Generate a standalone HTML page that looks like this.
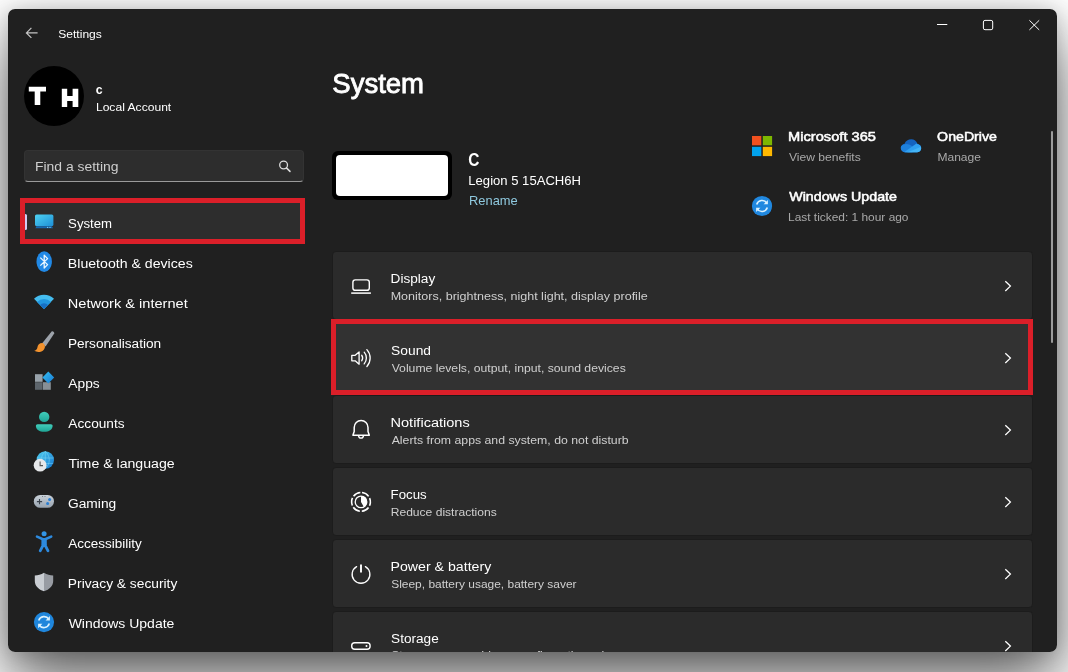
<!DOCTYPE html>
<html><head><meta charset="utf-8">
<style>
*{box-sizing:border-box;margin:0;padding:0}
html,body{width:1068px;height:672px;overflow:hidden;background:#fff;font-family:"Liberation Sans",sans-serif;color:#fff}
#win{will-change:transform;position:absolute;left:8px;top:9px;width:1049px;height:643px;background:#202020;border-radius:7px;overflow:hidden}
#shadow{position:absolute;left:8px;top:9px;width:1049px;height:643px;border-radius:7px;box-shadow:0 32px 64px rgba(0,0,0,.6),0 2px 21px rgba(0,0,0,.2)}
.abs{position:absolute}
.t{position:absolute;white-space:nowrap;transform-origin:0 50%;height:20px;line-height:20px}
.card{position:absolute;left:324px;width:701px;height:69px;background:#2b2b2b;border:1px solid #1c1c1c;border-radius:4px}
svg{position:absolute;overflow:visible}
</style></head><body>
<div id="shadow"></div>
<div id="win">
<!-- scrollbar -->
<div class="abs" style="left:1043px;top:122px;width:2px;height:212px;background:#9b9b9b;border-radius:1px"></div>

<!-- avatar -->
<div class="abs" style="left:16px;top:57px;width:60px;height:60px;border-radius:50%;background:#000"></div>
<!-- search -->
<div class="abs" style="left:16px;top:141px;width:280px;height:32px;background:#2d2d2d;border-radius:4px;border:1px solid #333;border-bottom:1px solid #9a9a9a"></div>
<!-- selected nav -->
<div class="abs" style="left:12px;top:189px;width:285px;height:46px;background:#2d2d2d"></div>
<div class="abs" style="left:16px;top:205px;width:2.8px;height:16px;background:#d3ccf4;border-radius:2px"></div>
<div class="abs" style="left:12px;top:189px;width:285px;height:46px;border:5px solid #db1f29"></div>

<!-- device thumbnail -->
<div class="abs" style="left:324px;top:142px;width:120px;height:49px;background:#000;border-radius:6px"></div>
<div class="abs" style="left:328px;top:146px;width:112px;height:41px;background:#fff;border-radius:4px"></div>

<!-- cards -->
<div class="card" style="top:242px"></div>
<div class="card" style="top:314px;background:#323232"></div>
<div class="card" style="top:386px"></div>
<div class="card" style="top:458px"></div>
<div class="card" style="top:530px"></div>
<div class="card" style="top:602px"></div>
<div class="abs" style="left:323px;top:310px;width:702px;height:76px;border:5px solid #db1f29"></div>

<svg style="left:0;top:0" width="1049" height="643" viewBox="8 9 1049 643">
<defs>
<linearGradient id="gSys" x1="0" y1="0" x2="1" y2="1"><stop offset="0" stop-color="#4fd3f2"/><stop offset="1" stop-color="#1d8fd6"/></linearGradient>
<linearGradient id="gTeal" x1="0" y1="0" x2="0" y2="1"><stop offset="0" stop-color="#41cdbb"/><stop offset="1" stop-color="#1fa596"/></linearGradient>
<linearGradient id="gGlobe" x1="0" y1="0" x2="1" y2="1"><stop offset="0" stop-color="#4fcdf0"/><stop offset="1" stop-color="#1577cf"/></linearGradient>
<linearGradient id="gPad" x1="0" y1="0" x2="0" y2="1"><stop offset="0" stop-color="#c9d1d9"/><stop offset="1" stop-color="#98a3af"/></linearGradient>
<linearGradient id="gDia" x1="0" y1="0" x2="1" y2="1"><stop offset="0" stop-color="#35c0f2"/><stop offset="1" stop-color="#1779d4"/></linearGradient>
<linearGradient id="gCloud" x1="0" y1="0" x2="0" y2="1"><stop offset="0" stop-color="#1769c4"/><stop offset="0.5" stop-color="#1f8fe6"/><stop offset="1" stop-color="#2fb0f5"/></linearGradient>
</defs>
<!-- back arrow -->
<path d="M31.4 27.9 L26.4 32.9 L31.4 37.9 M26.6 32.9 H37.6" fill="none" stroke="#c4c4c4" stroke-width="1.2"/>
<!-- window controls -->
<path d="M937 24.5 H947.3" stroke="#fff" stroke-width="1"/>
<rect x="983.4" y="20.4" width="9.3" height="9.3" rx="1.6" fill="none" stroke="#fff" stroke-width="1"/>
<path d="M1029.4 20.3 L1039.2 29.9 M1039.2 20.3 L1029.4 29.9" stroke="#fff" stroke-width="1"/>
<!-- avatar letters -->
<path d="M28.8 86.8 H46 V91.6 H40.3 V105 H34.7 V91.6 H28.8 Z" fill="#fff"/>
<path d="M61.8 88.7 H67.2 V96 H72.6 V88.7 H78.3 V106.9 H72.6 V101 H67.2 V106.9 H61.8 Z" fill="#fff"/>
<!-- search icon -->
<circle cx="283.6" cy="165" r="3.9" fill="none" stroke="#dcdcdc" stroke-width="1.3"/><path d="M286.4 167.9 L290 171.4" stroke="#dcdcdc" stroke-width="1.5" stroke-linecap="round"/>

<!-- nav: system -->
<rect x="35" y="214.4" width="18.4" height="11.8" rx="1.6" fill="url(#gSys)"/>
<path d="M36.5 226.2 H52 L53 228.2 H35.4 Z" fill="#1668b0"/>
<rect x="47" y="226.9" width="1.2" height="1" fill="#7fd4f5"/><rect x="49.4" y="226.9" width="1.2" height="1" fill="#7fd4f5"/>
<!-- bluetooth -->
<ellipse cx="44.2" cy="261.6" rx="7.7" ry="10.4" fill="#2189e6"/>
<path d="M40.3 257.6 L47.6 264.6 L44.2 268 V255.2 L47.6 258.6 L40.3 265.6" fill="none" stroke="#e8f6ff" stroke-width="1.3" stroke-linejoin="round"/>
<!-- wifi -->
<path d="M44 309 L34 298.8 A14.2 14.2 0 0 1 54 298.8 Z" fill="#45bdf0"/>
<path d="M44 309 L37 301.9 A10 10 0 0 1 51 301.9 Z" fill="#2196e0"/>
<path d="M44 309 L40 304.9 A5.7 5.7 0 0 1 48 304.9 Z" fill="#176fc4"/>
<!-- personalisation brush -->
<path d="M51.6 331.6 C52.6 330.8 54.6 332.2 54.2 333.6 L45.6 346.4 L42 343.6 Z" fill="#9da3ab"/>
<path d="M43.2 343.2 C40 342.6 37.6 345 37.4 347.6 C37.2 349.6 35.6 350.6 34.2 350.8 C37 352.6 41.6 352.4 44 349.4 C45.6 347.4 45.2 344.6 43.2 343.2 Z" fill="#f2922e"/>
<!-- apps -->
<rect x="35" y="374.2" width="7.6" height="7.6" fill="#98a2aa"/>
<rect x="35" y="382.2" width="7.6" height="7.6" fill="#5d656c"/>
<rect x="43" y="382.2" width="7.8" height="7.6" fill="#878f96"/>
<path d="M48.3 371.6 L54.2 377.5 L48.3 383.4 L42.4 377.5 Z" fill="url(#gDia)"/>
<!-- accounts -->
<circle cx="44.2" cy="416.9" r="5.2" fill="url(#gTeal)"/>
<path d="M37.6 424.2 H50.9 C52 424.2 52.6 425 52.6 426 C52.4 429.6 49 431.8 44.2 431.8 C39.4 431.8 36 429.6 35.9 426 C35.9 425 36.5 424.2 37.6 424.2 Z" fill="url(#gTeal)"/>
<!-- time & language -->
<circle cx="45.3" cy="460" r="8.7" fill="url(#gGlobe)"/>
<path d="M45.3 451.3 C40 456 40 464 45.3 468.7 M45.3 451.3 C50.6 456 50.6 464 45.3 468.7 M36.8 458 H53.8 M37.4 463.4 H53.2 M45.3 451.3 V468.7" fill="none" stroke="#7fdaf7" stroke-width=".7" opacity=".7"/>
<circle cx="40.1" cy="465.2" r="6.4" fill="#e6e8ea"/>
<path d="M40.1 461.6 V465.6 H43" fill="none" stroke="#555" stroke-width="1.1"/>
<!-- gaming -->
<rect x="33.8" y="495" width="20.2" height="12.8" rx="6.4" fill="url(#gPad)"/>
<path d="M39.5 499 V504.2 M36.9 501.6 H42.1" stroke="#39424c" stroke-width="1.1"/>
<circle cx="49.6" cy="499.4" r="1.5" fill="#2b7fd2"/><circle cx="47.6" cy="503.4" r="1.5" fill="#2b7fd2"/>
<circle cx="42.6" cy="496.6" r=".5" fill="#59636e"/><circle cx="45" cy="496.6" r=".5" fill="#59636e"/>
<!-- accessibility -->
<circle cx="44.1" cy="533.8" r="2.5" fill="#3395e6"/>
<g fill="none" stroke="#2d8ade" stroke-linecap="round" stroke-linejoin="round">
<path d="M37 536.6 L44.1 539.8 L51.2 536.6" stroke-width="2.6"/>
<path d="M44.1 540 V545" stroke-width="5.4" stroke-linecap="butt"/>
<path d="M43.2 545 L40.2 550.8 M45 545 L48 550.8" stroke-width="2.8"/>
</g>
<!-- privacy shield -->
<path d="M44 572.8 C41 574.6 38 575.4 34.8 575.4 V581 C34.8 586 38.6 589.6 44 591.2 Z" fill="#c9cdd2"/>
<path d="M44 572.8 C47 574.6 50 575.4 53.2 575.4 V581 C53.2 586 49.4 589.6 44 591.2 Z" fill="#989ca3"/>
<!-- windows update nav -->
<circle cx="44" cy="622.1" r="10.1" fill="#1f86dc"/>
<g fill="none" stroke="#d9f1ff" stroke-width="1.6">
<path d="M38.7 620.6 A5.6 5.6 0 0 1 48.8 619.2"/><path d="M49.3 623.6 A5.6 5.6 0 0 1 39.2 625"/>
</g>
<path d="M49.9 616 V620.4 H45.6 Z" fill="#d9f1ff"/><path d="M38.1 628.2 V623.8 H42.4 Z" fill="#d9f1ff"/>

<!-- header icons -->
<rect x="752" y="136" width="9.3" height="9.3" fill="#f1511f"/><rect x="762.8" y="136" width="9.3" height="9.3" fill="#7db701"/>
<rect x="752" y="146.8" width="9.3" height="9.3" fill="#02a3ee"/><rect x="762.8" y="146.8" width="9.3" height="9.3" fill="#fdb801"/>
<clipPath id="cpCloud"><path d="M905.4 152.3 C902.8 152.3 900.8 150.4 900.8 148 C900.8 145.8 902.4 144 904.6 143.7 C905.6 141 908.2 139.3 911.2 139.3 C914.2 139.3 916.6 141.2 917.5 143.9 C919.6 144.1 921.2 145.8 921.2 148 C921.2 150.4 919.4 152.3 917 152.3 Z"/></clipPath>
<g clip-path="url(#cpCloud)">
<rect x="900" y="138" width="22" height="15" fill="#1463c0"/>
<ellipse cx="906.4" cy="149.6" rx="7.2" ry="5.6" fill="#1e80dc"/>
<path d="M903 153 L916.5 143.4 C920 143.6 922 146 922 148.4 V153 Z" fill="#2f9ff0"/>
<path d="M906 153 L921.6 146.4 V153 Z" fill="#43b4f6"/>
</g>
<circle cx="762" cy="206" r="10.1" fill="#2088e0"/>
<g fill="none" stroke="#d9f1ff" stroke-width="1.6">
<path d="M756.7 204.5 A5.6 5.6 0 0 1 766.8 203.1"/><path d="M767.3 207.5 A5.6 5.6 0 0 1 757.2 208.9"/>
</g>
<path d="M767.9 199.9 V204.3 H763.6 Z" fill="#d9f1ff"/><path d="M756.1 212.1 V207.7 H760.4 Z" fill="#d9f1ff"/>

<!-- card icons -->
<g fill="none" stroke="#fff" stroke-width="1.4">
<rect x="352.9" y="279.9" width="16.4" height="10.4" rx="2.4"/><path d="M351.2 293.1 H370.9" stroke-width="1.5"/>
<path d="M351.8 355.3 H355.2 L359.1 351.9 V364.2 L355.2 360.8 H351.8 Z" stroke-linejoin="round" stroke-width="1.3"/>
<path d="M361.7 355.2 A5 5 0 0 1 361.7 360.8 M364.2 352.2 A9 9 0 0 1 364.2 363.9 M366.9 349.6 A12.6 12.6 0 0 1 366.9 366.5" stroke-width="1.3" stroke-linecap="round"/>
<path d="M352.9 435.3 L354.2 431.6 V427.4 A6.9 6.9 0 0 1 368 427.4 V431.6 L369.3 435.3 Z" stroke-linejoin="round" stroke-width="1.5"/>
<path d="M358.5 435.8 A2.6 3.2 0 0 0 363.5 435.8" stroke-width="1.4"/>
<circle cx="361" cy="501.9" r="9.4" stroke-width="1.6" stroke-dasharray="7.84 2" transform="rotate(-84 361 501.9)"/>
<circle cx="361" cy="501.9" r="5.8" stroke-width="1.3"/>
<path d="M356.6 566.6 A8.9 8.9 0 1 0 365.4 566.6" stroke-width="1.3" stroke-linecap="round"/>
<path d="M361 564.4 V572.6" stroke-width="1.9"/>
<rect x="351.7" y="642.8" width="18.4" height="6.4" rx="3" stroke-width="1.4"/>
</g>
<path d="M361 501.9 V496.1 A5.8 5.8 0 0 1 363.9 506.9 Z" fill="#fff"/>
<circle cx="366.5" cy="645.9" r="1" fill="#fff"/>
<!-- chevrons -->
<g fill="none" stroke="#fff" stroke-width="1.3">
<path d="M1005.3 281.2 L1010.4 286.1 L1005.3 291"/>
<path d="M1005.3 353.2 L1010.4 358.1 L1005.3 363"/>
<path d="M1005.3 425.2 L1010.4 430.1 L1005.3 435"/>
<path d="M1005.3 497.2 L1010.4 502.1 L1005.3 507"/>
<path d="M1005.3 569.2 L1010.4 574.1 L1005.3 579"/>
<path d="M1005.3 641.2 L1010.4 646.1 L1005.3 651"/>
</g>
</svg>

<div class="t" style="left:50px;top:15px;font-size:11.75px;color:#ffffff;transform:translateX(0.25px) scaleX(1.0266)">Settings</div>
<div class="t" style="left:87px;top:71px;font-size:13px;font-weight:bold;color:#ffffff;transform:translateX(0.82px) scaleX(0.9462)">c</div>
<div class="t" style="left:87px;top:88px;font-size:11.75px;color:#ffffff;transform:translateX(0.91px) scaleX(1.0294)">Local Account</div>
<div class="t" style="left:26px;top:148px;font-size:13.7px;color:#cfcfcf;transform:translateX(0.96px) scaleX(1.0167)">Find a setting</div>
<div class="t" style="left:60px;top:205px;font-size:13.7px;color:#ffffff;transform:translateX(0.10px) scaleX(0.9635)">System</div>
<div class="t" style="left:59px;top:245px;font-size:13.7px;color:#ffffff;transform:translateX(0.84px) scaleX(1.0321)">Bluetooth &amp; devices</div>
<div class="t" style="left:59px;top:285px;font-size:13.7px;color:#ffffff;transform:translateX(0.80px) scaleX(1.0650)">Network &amp; internet</div>
<div class="t" style="left:59px;top:325px;font-size:13.7px;color:#ffffff;transform:translateX(0.88px) scaleX(0.9970)">Personalisation</div>
<div class="t" style="left:60px;top:365px;font-size:13.7px;color:#ffffff;transform:translateX(0.37px) scaleX(1.0040)">Apps</div>
<div class="t" style="left:60px;top:405px;font-size:13.7px;color:#ffffff;transform:translateX(0.37px) scaleX(0.9986)">Accounts</div>
<div class="t" style="left:60px;top:445px;font-size:13.7px;color:#ffffff;transform:translateX(0.38px) scaleX(1.0318)">Time &amp; language</div>
<div class="t" style="left:60px;top:485px;font-size:13.7px;color:#ffffff;transform:translateX(0.01px) scaleX(1.0053)">Gaming</div>
<div class="t" style="left:60px;top:525px;font-size:13.7px;color:#ffffff;transform:translateX(0.37px) scaleX(0.9854)">Accessibility</div>
<div class="t" style="left:59px;top:565px;font-size:13.7px;color:#ffffff;transform:translateX(0.87px) scaleX(1.0064)">Privacy &amp; security</div>
<div class="t" style="left:60px;top:605px;font-size:13.7px;color:#ffffff;transform:translateX(0.64px) scaleX(1.0214)">Windows Update</div>
<div class="t" style="left:324px;top:65px;font-size:27.5px;-webkit-text-stroke:0.85px #ffffff;color:#ffffff;transform:translateX(0.28px) scaleX(1.0003)">System</div>
<div class="t" style="left:460px;top:141px;font-size:18.5px;font-weight:bold;color:#ffffff;transform:translateX(0.37px) scaleX(0.8350)">C</div>
<div class="t" style="left:460px;top:162px;font-size:13.5px;color:#ffffff;transform:translateX(0.33px) scaleX(0.9683)">Legion 5 15ACH6H</div>
<div class="t" style="left:461px;top:182px;font-size:13.5px;color:#8fc9df;transform:translateX(0.04px) scaleX(0.9550)">Rename</div>
<div class="t" style="left:780px;top:118px;font-size:13.5px;-webkit-text-stroke:0.54px #ffffff;color:#ffffff;transform:translateX(0.09px) scaleX(1.0839)">Microsoft 365</div>
<div class="t" style="left:780px;top:138px;font-size:11.75px;color:#a9a9a9;transform:translateX(0.95px) scaleX(1.0304)">View benefits</div>
<div class="t" style="left:929px;top:118px;font-size:13.5px;-webkit-text-stroke:0.54px #ffffff;color:#ffffff;transform:translateX(0.11px) scaleX(1.0494)">OneDrive</div>
<div class="t" style="left:929px;top:138px;font-size:11.75px;color:#a9a9a9;transform:translateX(0.41px) scaleX(1.0250)">Manage</div>
<div class="t" style="left:781px;top:178px;font-size:13.5px;-webkit-text-stroke:0.54px #ffffff;color:#ffffff;transform:translateX(0.22px) scaleX(1.0556)">Windows Update</div>
<div class="t" style="left:780px;top:198px;font-size:11.75px;color:#a9a9a9;transform:translateX(0.02px) scaleX(1.0134)">Last ticked: 1 hour ago</div>
<div class="t" style="left:382px;top:260px;font-size:13.7px;color:#ffffff;transform:translateX(0.58px) scaleX(0.9948)">Display</div>
<div class="t" style="left:382px;top:277px;font-size:11.75px;color:#cfcfcf;transform:translateX(0.67px) scaleX(1.0663)">Monitors, brightness, night light, display profile</div>
<div class="t" style="left:383px;top:332px;font-size:13.7px;color:#ffffff;transform:translateX(0.07px) scaleX(1.0086)">Sound</div>
<div class="t" style="left:383px;top:349px;font-size:11.75px;color:#cfcfcf;transform:translateX(0.65px) scaleX(1.0388)">Volume levels, output, input, sound devices</div>
<div class="t" style="left:382px;top:404px;font-size:13.7px;color:#ffffff;transform:translateX(0.51px) scaleX(1.0626)">Notifications</div>
<div class="t" style="left:383px;top:421px;font-size:11.75px;color:#cfcfcf;transform:translateX(0.68px) scaleX(1.0455)">Alerts from apps and system, do not disturb</div>
<div class="t" style="left:382px;top:476px;font-size:13.7px;color:#ffffff;transform:translateX(0.61px) scaleX(0.9676)">Focus</div>
<div class="t" style="left:382px;top:493px;font-size:11.75px;color:#cfcfcf;transform:translateX(0.71px) scaleX(1.0275)">Reduce distractions</div>
<div class="t" style="left:382px;top:548px;font-size:13.7px;color:#ffffff;transform:translateX(0.54px) scaleX(1.0340)">Power &amp; battery</div>
<div class="t" style="left:383px;top:565px;font-size:11.75px;color:#cfcfcf;transform:translateX(0.16px) scaleX(1.0176)">Sleep, battery usage, battery saver</div>
<div class="t" style="left:383px;top:620px;font-size:13.7px;color:#ffffff;transform:translateX(0.08px) scaleX(0.9934)">Storage</div>
<div class="t" style="left:383px;top:636px;font-size:11.75px;color:#cfcfcf;transform:translateX(0.14px) scaleX(1.0463)">Storage space, drives, configuration rules</div>
</div>
</body></html>
